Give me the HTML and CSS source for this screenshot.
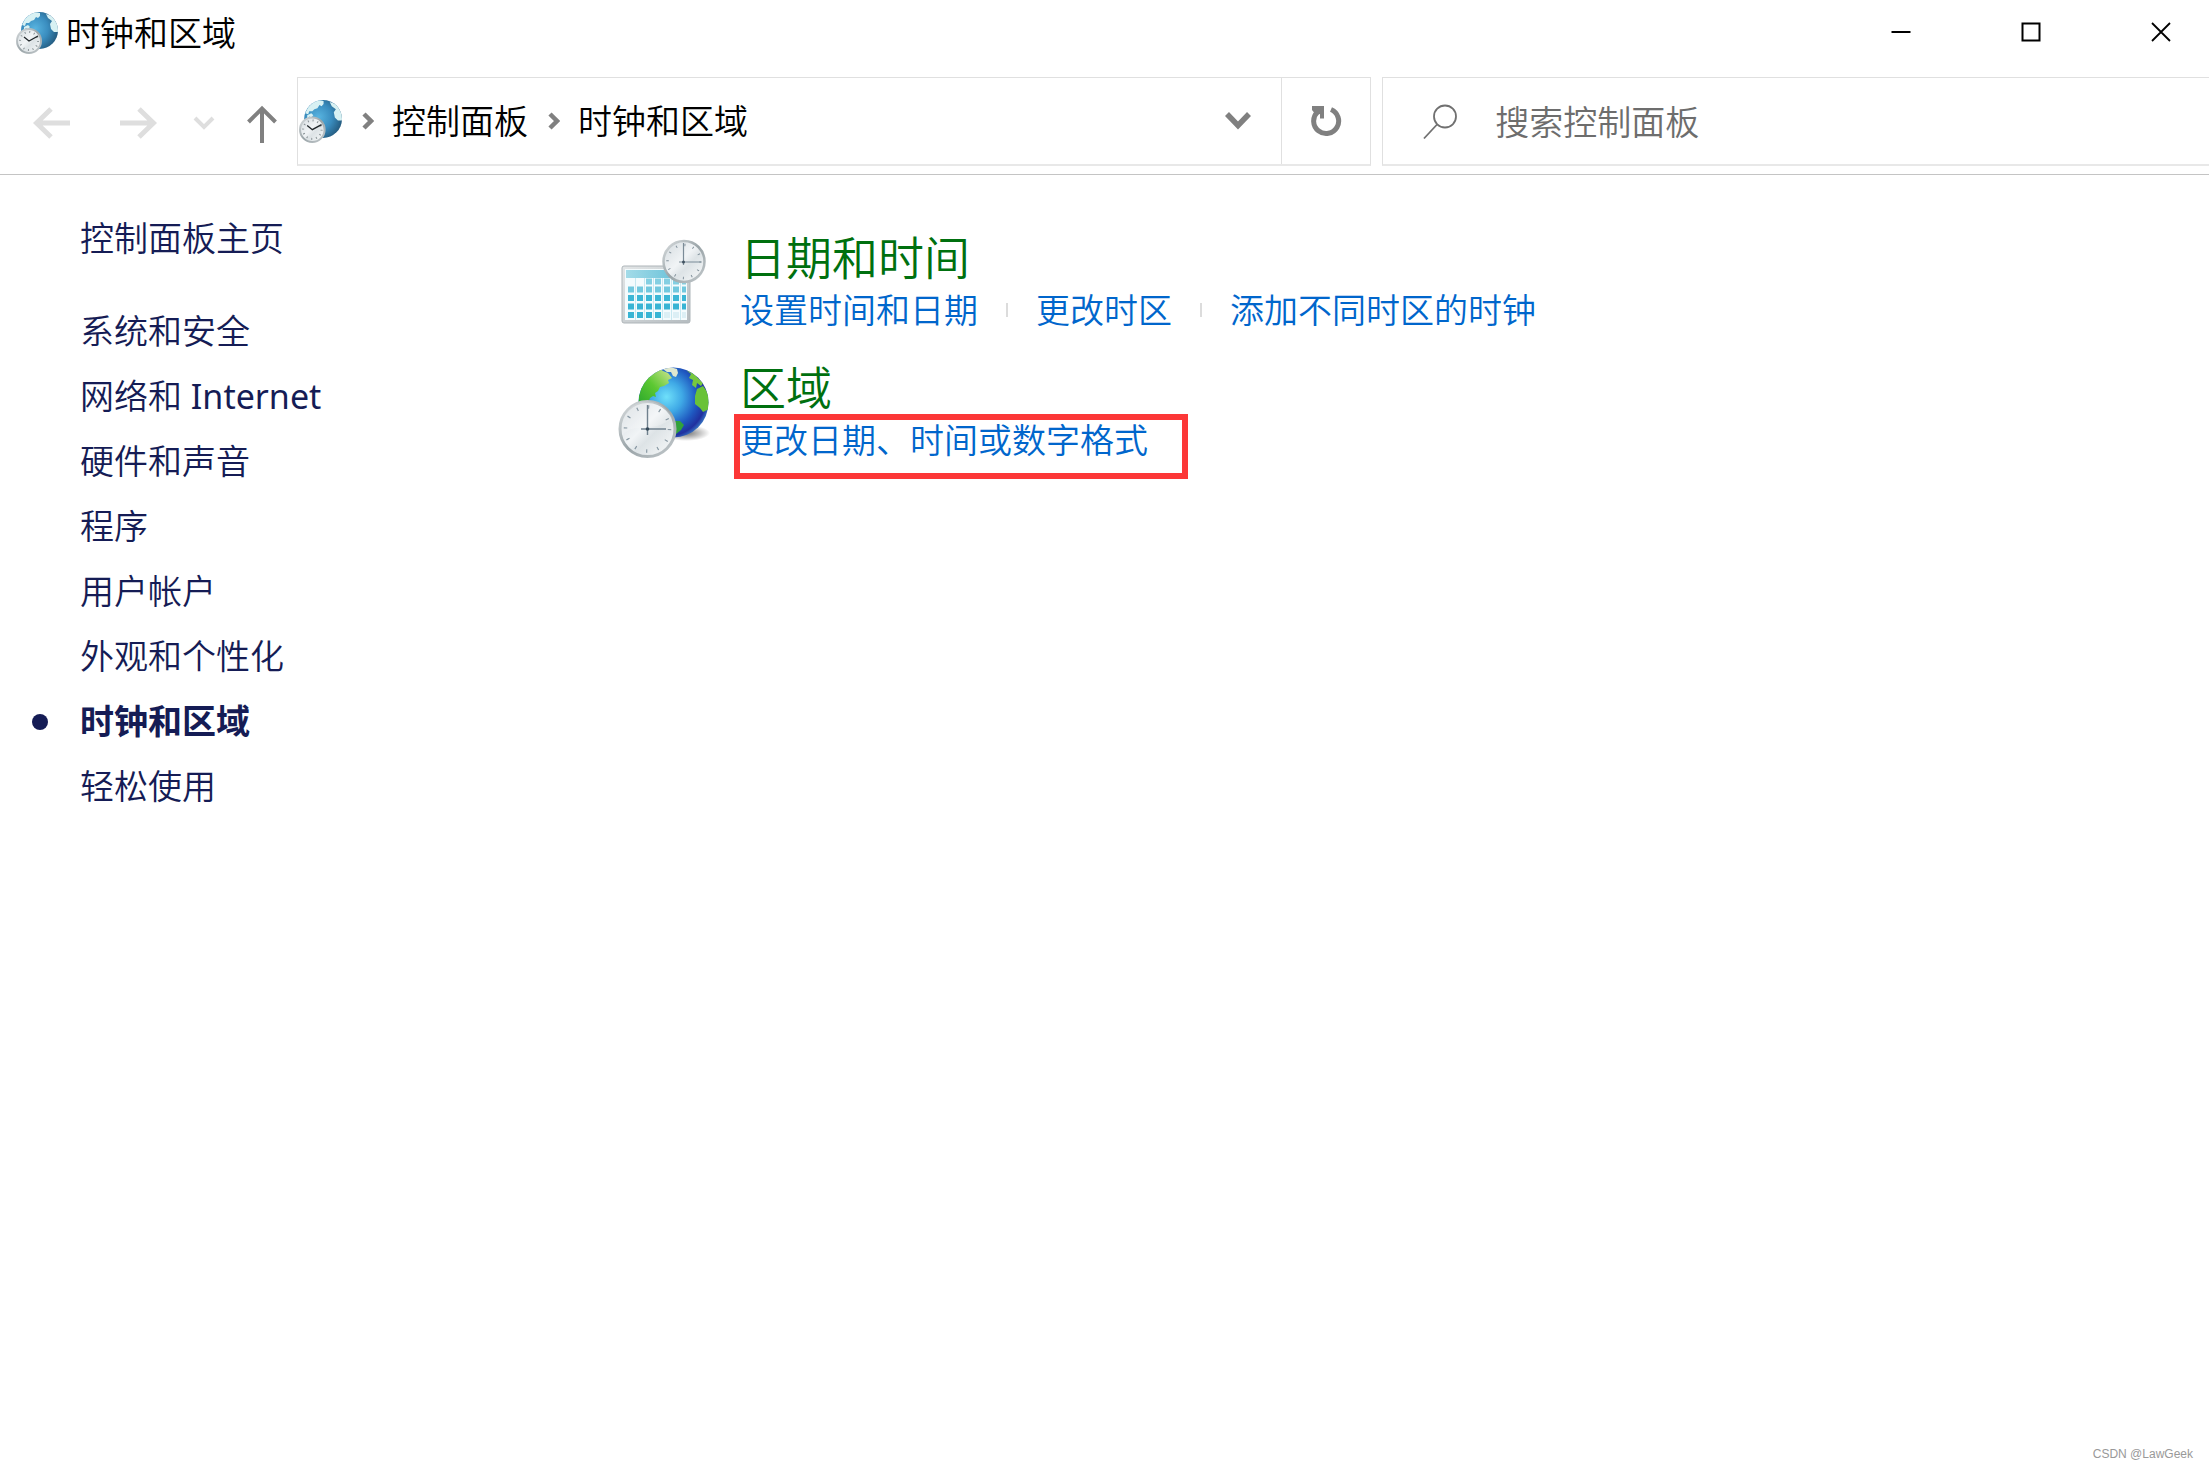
FILE: index.html
```
<!DOCTYPE html>
<html lang="zh-CN">
<head>
  <meta charset="UTF-8" />
  <title>时钟和区域</title>
  <meta name="viewport" content="width=device-width, initial-scale=1.0">
  <link rel="stylesheet" href="styles.css">
</head>
<body>

<!-- shared gradients and the small globe icon -->
<svg class="defs" width="0" height="0" aria-hidden="true">
  <defs>
    <radialGradient id="miniGlobe" cx="0.38" cy="0.45" r="0.7">
      <stop offset="0" stop-color="#58b4e0"/>
      <stop offset="0.5" stop-color="#3a8dbf"/>
      <stop offset="1" stop-color="#1f4f70"/>
    </radialGradient>
    <linearGradient id="clockFace" x1="0" y1="0" x2="1" y2="1">
      <stop offset="0" stop-color="#d3dade"/>
      <stop offset="0.45" stop-color="#f1f4f6"/>
      <stop offset="0.6" stop-color="#dde3e6"/>
      <stop offset="1" stop-color="#fbfcfc"/>
    </linearGradient>
    <linearGradient id="clockRim" x1="0" y1="0" x2="1" y2="1">
      <stop offset="0" stop-color="#d9dddf"/>
      <stop offset="0.5" stop-color="#9aa4a8"/>
      <stop offset="1" stop-color="#c3c9cc"/>
    </linearGradient>
    <radialGradient id="globe" cx="0.4" cy="0.42" r="0.64">
      <stop offset="0" stop-color="#6fe0fa"/>
      <stop offset="0.35" stop-color="#3fa9e6"/>
      <stop offset="0.68" stop-color="#1f58c0"/>
      <stop offset="0.88" stop-color="#20309f"/>
      <stop offset="1" stop-color="#3c80c8"/>
    </radialGradient>
    <linearGradient id="land" x1="0" y1="1" x2="1" y2="0">
      <stop offset="0" stop-color="#28a52c"/>
      <stop offset="0.5" stop-color="#5cc832"/>
      <stop offset="1" stop-color="#d5e596"/>
    </linearGradient>
    <radialGradient id="shadow">
      <stop offset="0" stop-color="#000" stop-opacity="0.55"/>
      <stop offset="1" stop-color="#000" stop-opacity="0"/>
    </radialGradient>
    <linearGradient id="calHead" x1="0" y1="0" x2="1" y2="0">
      <stop offset="0" stop-color="#a3dbe8"/>
      <stop offset="1" stop-color="#5fbdd6"/>
    </linearGradient>
    <linearGradient id="calFrame" x1="0" y1="0" x2="1" y2="1">
      <stop offset="0" stop-color="#e3e6e7"/>
      <stop offset="1" stop-color="#b5bcc0"/>
    </linearGradient>
    <clipPath id="miniClip"><circle cx="23.5" cy="18.5" r="18.5"/></clipPath>
    <clipPath id="globeClip"><circle cx="57.5" cy="36.5" r="35"/></clipPath>
  </defs>
  <symbol id="regionSmall" viewBox="0 0 42 42">
    <circle cx="23.5" cy="18.5" r="18.5" fill="url(#miniGlobe)"/>
    <g clip-path="url(#miniClip)" fill="#d8f1f3">
      <path d="M6 13 L9 7 L14 2 L19 0 L24 1 L24 4 L22 6 L20 5 L18 8 L15 9 L13 11 L10 11 L9 14Z"/>
      <path d="M8 15 L12 13 L14 15 L12 17 L10 16 L8 18Z"/>
      <path d="M30 2 L36 4 L43 14 L42 20 L38 20 L35 17 L34 12 L36 9 L32 6Z"/>
    </g>
    <circle cx="13" cy="29" r="12" fill="url(#clockFace)" stroke="url(#clockRim)" stroke-width="2"/>
    <circle cx="13" cy="29" r="9" fill="none" stroke="#8b9498" stroke-width="2" stroke-dasharray="1 3.712"/>
    <path d="M8 25 L13 29 L22 24" fill="none" stroke="#20262a" stroke-width="1.3"/>
  </symbol>
</svg>

<header class="titlebar">
  <svg class="app-icon" width="42" height="42"><use href="#regionSmall"/></svg>
  <h1 class="title">时钟和区域</h1>
  <div class="window-buttons">
    <button type="button" aria-label="最小化">
      <svg width="20" height="20" viewBox="0 0 20 20"><path d="M0.5 10 H19.5" stroke="#000" stroke-width="2"/></svg>
    </button>
    <button type="button" aria-label="最大化">
      <svg width="20" height="20" viewBox="0 0 20 20"><rect x="1.5" y="1.5" width="17" height="17" fill="none" stroke="#000" stroke-width="2"/></svg>
    </button>
    <button type="button" aria-label="关闭">
      <svg width="20" height="20" viewBox="0 0 20 20"><path d="M1 1 L19 19 M19 1 L1 19" stroke="#000" stroke-width="1.8"/></svg>
    </button>
  </div>
</header>

<nav class="toolbar">
  <div class="nav-buttons">
    <button type="button" class="nav-back" aria-label="后退" disabled>
      <svg width="38" height="32" viewBox="0 0 38 32"><path d="M37 16 H4 M18 2 L3.500 16 L18 30" fill="none" stroke="#dedede" stroke-width="5"/></svg>
    </button>
    <button type="button" class="nav-forward" aria-label="前进" disabled>
      <svg width="38" height="32" viewBox="0 0 38 32"><path d="M1 16 H34 M20 2 L34.500 16 L20 30" fill="none" stroke="#dedede" stroke-width="5"/></svg>
    </button>
    <button type="button" class="nav-recent" aria-label="最近浏览的位置" disabled>
      <svg width="22" height="14" viewBox="0 0 22 14"><path d="M2 2 L11 11 L20 2" fill="none" stroke="#dedede" stroke-width="4"/></svg>
    </button>
    <button type="button" class="nav-up" aria-label="上移">
      <svg width="30" height="42" viewBox="0 0 30 42"><path d="M15 41 V7 M1.500 20 L15 6.500 L28.500 20" fill="none" stroke="#808080" stroke-width="4"/></svg>
    </button>
  </div>

  <div class="address">
    <svg class="address-icon" width="43" height="43"><use href="#regionSmall"/></svg>
    <svg class="crumb-arrow" width="12" height="18" viewBox="0 0 12 18"><path d="M2 2 L9 9 L2 16" fill="none" stroke="#808080" stroke-width="4.500"/></svg>
    <a href="#">控制面板</a>
    <svg class="crumb-arrow" width="12" height="18" viewBox="0 0 12 18"><path d="M2 2 L9 9 L2 16" fill="none" stroke="#808080" stroke-width="4.500"/></svg>
    <a href="#">时钟和区域</a>
    <button type="button" class="address-drop" aria-label="以前的位置">
      <svg width="26" height="18" viewBox="0 0 26 18"><path d="M2 2 L13 13.500 L24 2" fill="none" stroke="#808080" stroke-width="5.500"/></svg>
    </button>
    <button type="button" class="address-refresh" aria-label="刷新">
      <svg width="32" height="32" viewBox="0 0 32 32">
        <path d="M21 4.500 A12.500 12.500 0 1 1 7.500 7" fill="none" stroke="#808080" stroke-width="5"/>
        <path d="M2 1 H14 V13.500 H10 V9 L6 10 L2 5Z" fill="#808080"/>
      </svg>
    </button>
  </div>

  <form class="search">
    <svg width="34" height="36" viewBox="0 0 34 36"><circle cx="22" cy="12.500" r="11" fill="none" stroke="#707070" stroke-width="1.800"/><path d="M14 20.500 L1 34.500" stroke="#707070" stroke-width="1.800"/></svg>
    <input type="text" placeholder="搜索控制面板" aria-label="搜索控制面板">
  </form>
</nav>

<div class="content">
  <aside class="sidebar">
    <a class="home" href="#">控制面板主页</a>
    <ul>
      <li><a href="#">系统和安全</a></li>
      <li><a href="#">网络和 <span class="latin">Internet</span></a></li>
      <li><a href="#">硬件和声音</a></li>
      <li><a href="#">程序</a></li>
      <li><a href="#">用户帐户</a></li>
      <li><a href="#">外观和个性化</a></li>
      <li class="current"><a href="#">时钟和区域</a></li>
      <li><a href="#">轻松使用</a></li>
    </ul>
  </aside>

  <main class="categories">
    <section class="category">
      <svg class="category-icon" width="96" height="96" viewBox="0 0 96 96">
        <rect x="6" y="30" width="68" height="57" rx="2" fill="url(#calFrame)" stroke="#aeb5b9"/>
        <rect x="9" y="33" width="62" height="51" fill="#f4fbfd"/>
        <rect x="10" y="34" width="60" height="8" fill="url(#calHead)"/>
        <!-- one path per calendar week -->
        <g fill="none" stroke-width="6">
          <path d="M30 45.500 H70" stroke="#83cfe2" stroke-dasharray="6 3"/>
          <path d="M12 53.500 H70" stroke="#72c8de" stroke-dasharray="6 3"/>
          <path d="M12 62 H70" stroke="#3db7d6" stroke-dasharray="6 3"/>
          <path d="M12 70.500 H70" stroke="#37b4d4" stroke-dasharray="6 3"/>
          <path d="M12 79 H45" stroke="#37b4d4" stroke-dasharray="6 3"/>
          <path d="M48 79 H70" stroke="#dceff5" stroke-dasharray="6 3"/>
        </g>
        <path d="M19.500 42 V84 M28.500 42 V84 M37.500 42 V84 M46.500 42 V84 M55.500 42 V84 M64.500 42 V84" stroke="#a8dcea" stroke-width="0.600"/>
        <circle cx="68" cy="25.500" r="20.500" fill="url(#clockFace)" stroke="url(#clockRim)" stroke-width="2.500"/>
        <circle cx="68" cy="25.500" r="16.500" fill="none" stroke="#81909a" stroke-width="2.500" stroke-dasharray="1 7.639"/>
        <path d="M67.500 7 V29 M63 26 H85" stroke="#7b8b97" stroke-width="1.200"/>
        <circle cx="67.500" cy="26" r="1.500" fill="#425361"/>
      </svg>
      <div class="category-text">
        <h2><a href="#">日期和时间</a></h2>
        <div class="tasks">
          <a href="#">设置时间和日期</a>
          <a href="#">更改时区</a>
          <a href="#">添加不同时区的时钟</a>
        </div>
      </div>
    </section>

    <section class="category">
      <svg class="category-icon" width="96" height="96" viewBox="0 0 96 96">
        <ellipse cx="70" cy="67" rx="24" ry="8" fill="url(#shadow)"/>
        <circle cx="57.500" cy="36.500" r="35" fill="url(#globe)"/>
        <g clip-path="url(#globeClip)">
          <path d="M22 36 L25 18 L34 8 L44 3 L47 5 L52 7 L56 12 L52 14 L53 17 L48 20 L44 21 L42 25 L39 27 L40 31 L37 30 L34 32 L32 38 L28 40Z" fill="url(#land)"/>
          <path d="M47 3 L54 1 L61 3 L62 7 L60 11 L57 10 L55 6 L51 6Z" fill="#dfe8cf"/>
          <path d="M70 4 L78 8 L87 17 L85 20 L81 17 L80 22 L76 19 L77 14 L73 12 L75 8Z" fill="#77c83f"/>
          <path d="M81 23 L87 20 L94 30 L93 43 L87 46 L84 42 L79 38 L79 30Z" fill="#69c238"/>
          <path d="M54 55 L64 55 L68 59 L65 64 L60 68 L55 72Z" fill="#31a13b"/>
        </g>
        <circle cx="31.500" cy="63" r="27.500" fill="url(#clockFace)" stroke="url(#clockRim)" stroke-width="3"/>
        <path d="M6 69 C19 55 38 68 56 52 A26 26 0 0 0 6 58Z" fill="#fff" opacity="0.200"/>
        <circle cx="31.500" cy="63" r="22" fill="none" stroke="#8797a2" stroke-width="3.500" stroke-dasharray="1.200 10.319"/>
        <path d="M31.500 39 V69 M25 63 H50" stroke="#70818e" stroke-width="1.400"/>
        <circle cx="31.500" cy="63" r="1.800" fill="#334858"/>
      </svg>
      <div class="category-text">
        <h2><a href="#">区域</a></h2>
        <div class="tasks">
          <a class="marked" href="#">更改日期、时间或数字格式</a>
        </div>
      </div>
    </section>
  </main>
</div>

<footer class="watermark">CSDN @LawGeek</footer>

</body>
</html>
```
FILE: styles.css
```
* {
  box-sizing: border-box;
}

body {
  margin: 0;
  min-height: 100vh;
  display: flex;
  flex-direction: column;
  overflow-x: hidden;
  background: #fff;
  color: #000;
  font-family: "Noto Sans", "Noto Sans CJK SC", sans-serif;
  font-size: 34px;
  font-weight: 350;
  line-height: 46px;
}

a {
  color: inherit;
  text-decoration: none;
}

a:hover {
  text-decoration: underline;
}

svg {
  display: block;
  flex-shrink: 0;
}

button {
  display: flex;
  align-items: center;
  justify-content: center;
  padding: 0;
  border: none;
  background: none;
}

.defs {
  position: absolute;
}

.latin {
  font-weight: 400;
}

/* title bar */
.titlebar {
  display: flex;
  align-items: center;
  height: 66px;
  padding-left: 16px;
}

.title {
  margin: 0 0 0 8px;
  font-size: 34px;
  font-weight: inherit;
}

/* the close button runs past the window edge */
.window-buttons {
  display: flex;
  align-self: flex-start;
  margin-left: auto;
  margin-right: -17px;
}

.window-buttons button {
  width: 130px;
  height: 64px;
}

/* toolbar */
.toolbar {
  display: flex;
  height: 109px;
  padding: 11px 0 8px;
  border-bottom: 1px solid #c4c4c4;
}

.nav-buttons {
  display: flex;
  align-items: center;
  width: 297px;
  padding: 2px 0 0 33px;
}

.nav-forward {
  margin-left: 48px;
}

.nav-recent {
  margin-left: 36px;
}

.nav-up {
  margin-left: 32px;
}

.address {
  flex: 15;
  display: flex;
  align-items: center;
  padding-left: 1px;
  border: 1px solid #e0e0e0;
  border-bottom: 2px solid #e8e8e8;
}

.crumb-arrow {
  margin: 0 18px 0 20px;
}

.address-drop {
  width: 86px;
  height: 100%;
  margin-left: auto;
}

.address-refresh {
  width: 89px;
  height: 100%;
  border-left: 1px solid #e0e0e0;
}

.search {
  flex: 11;
  display: flex;
  align-items: center;
  margin-left: 11px;
  padding: 2px 0 0 40px;
  border: 1px solid #e0e0e0;
  border-right: none;
  border-bottom: 2px solid #e8e8e8;
}

.search input {
  flex: 1;
  min-width: 0;
  margin-left: 38px;
  padding: 0;
  border: none;
  outline: none;
  background: none;
  font: inherit;
  color: #000;
}

.search input::placeholder {
  color: #6d6d6d;
  opacity: 1;
}

/* content */
.content {
  flex: 1;
  display: flex;
}

.sidebar {
  width: 616px;
  padding: 31px 0 0 80px;
  line-height: 65px;
  color: #151c55;
}

.home {
  display: block;
}

.sidebar ul {
  margin: 28px 0 0;
  padding: 0;
  list-style: none;
}

.current {
  display: flex;
  align-items: center;
  margin-left: -48px;
  font-weight: 700;
}

.current::before {
  content: "";
  width: 16px;
  height: 16px;
  margin-right: 32px;
  border-radius: 50%;
  background: #151c55;
}

.categories {
  flex: 1;
  padding-top: 52px;
}

.category {
  display: flex;
  margin-bottom: 24px;
}

.category-icon {
  margin: 9px 28px 0 0;
}

.category h2 {
  margin: 0;
  font-size: 46px;
  line-height: 60px;
  font-weight: inherit;
  color: #00700f;
}

.tasks {
  display: flex;
  align-items: center;
  height: 46px;
  color: #0066cc;
}

.tasks a + a {
  display: flex;
  align-items: center;
}

.tasks a + a::before {
  content: "";
  width: 2px;
  height: 14px;
  margin: 0 28px;
  background: #dcdcdc;
}

.marked {
  position: relative;
}

/* red frame drawn over the link */
.marked::after {
  content: "";
  position: absolute;
  top: -3px;
  left: -6px;
  box-sizing: border-box;
  width: 454px;
  height: 65px;
  border: 6px solid #fc3737;
}

.watermark {
  padding: 0 16px 6px;
  font-family: "Liberation Sans", Arial, sans-serif;
  font-size: 12px;
  font-weight: 400;
  line-height: 18px;
  text-align: right;
  color: #999;
}
```
